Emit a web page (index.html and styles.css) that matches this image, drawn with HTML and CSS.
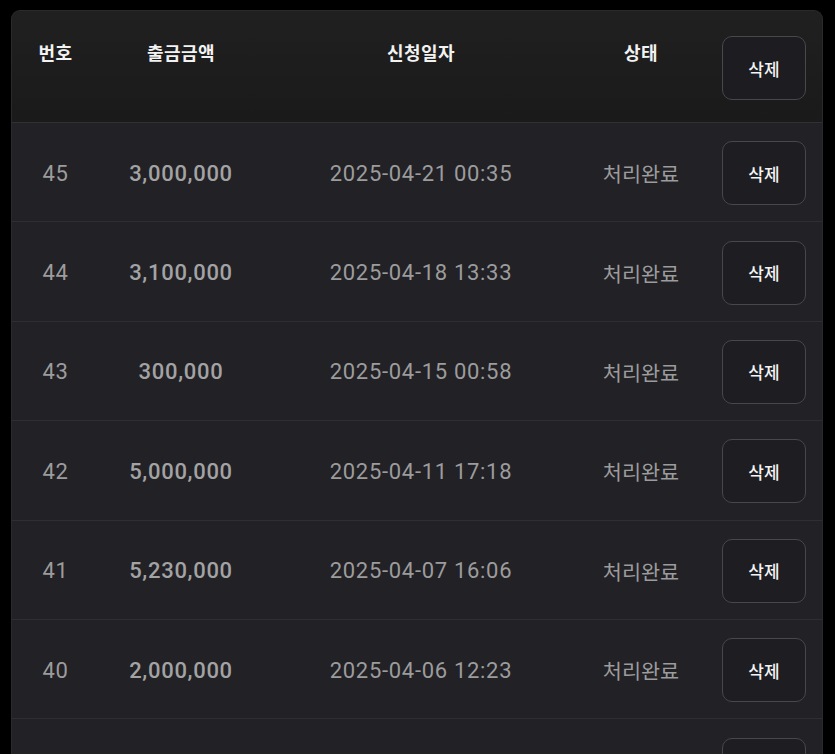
FILE: index.html
```html
<!DOCTYPE html>
<html lang="ko">
<head>
<meta charset="utf-8">
<link rel="stylesheet" href="styles.css">
</head>
<body>
<div class="card">
  <div class="row head">
    <div class="cell">번호</div>
    <div class="cell">출금금액</div>
    <div class="cell">신청일자</div>
    <div class="cell">상태</div>
    <div class="cell act"><button class="btn">삭제</button></div>
  </div>
  <div class="row">
    <div class="cell num">45</div>
    <div class="cell amt">3,000,000</div>
    <div class="cell date">2025-04-21 00:35</div>
    <div class="cell status">처리완료</div>
    <div class="cell act"><button class="btn">삭제</button></div>
  </div>
  <div class="row">
    <div class="cell num">44</div>
    <div class="cell amt">3,100,000</div>
    <div class="cell date">2025-04-18 13:33</div>
    <div class="cell status">처리완료</div>
    <div class="cell act"><button class="btn">삭제</button></div>
  </div>
  <div class="row">
    <div class="cell num">43</div>
    <div class="cell amt">300,000</div>
    <div class="cell date">2025-04-15 00:58</div>
    <div class="cell status">처리완료</div>
    <div class="cell act"><button class="btn">삭제</button></div>
  </div>
  <div class="row">
    <div class="cell num">42</div>
    <div class="cell amt">5,000,000</div>
    <div class="cell date">2025-04-11 17:18</div>
    <div class="cell status">처리완료</div>
    <div class="cell act"><button class="btn">삭제</button></div>
  </div>
  <div class="row">
    <div class="cell num">41</div>
    <div class="cell amt">5,230,000</div>
    <div class="cell date">2025-04-07 16:06</div>
    <div class="cell status">처리완료</div>
    <div class="cell act"><button class="btn">삭제</button></div>
  </div>
  <div class="row">
    <div class="cell num">40</div>
    <div class="cell amt">2,000,000</div>
    <div class="cell date">2025-04-06 12:23</div>
    <div class="cell status">처리완료</div>
    <div class="cell act"><button class="btn">삭제</button></div>
  </div>
  <div class="row last">
    <div class="cell num"></div>
    <div class="cell amt"></div>
    <div class="cell date"></div>
    <div class="cell status"></div>
    <div class="cell act"><button class="btn"></button></div>
  </div>
</div>
</body>
</html>
```
FILE: styles.css
```css
html, body {
  margin: 0;
  padding: 0;
  background: #000;
  height: 754px;
  overflow: hidden;
}
body {
  box-sizing: border-box;
  padding: 10px 12px 0 11px;
  font-family: Roboto, "Noto Sans CJK KR", sans-serif;
}
.card {
  background: #222126;
  border-radius: 9px 9px 0 0;
  overflow: hidden;
  border: 1px solid #2a2a2c;
  border-bottom: none;
  height: 744px;
  box-sizing: border-box;
}
.row {
  display: grid;
  grid-template-columns: 87px 164px 316px 124px 120px;
  height: 99.4px;
  box-sizing: border-box;
  padding-top: 2px;
  border-bottom: 1px solid #2f2e34;
  align-items: center;
}
.cell {
  text-align: center;
}
.head {
  height: 112px;
  padding-top: 0;
  background: linear-gradient(#202020, #1a1a1a);
  border-bottom: 1px solid #303035;
  align-items: start;
}
.head .cell {
  font-family: "Noto Sans CJK KR", sans-serif;
  font-weight: 700;
  font-size: 18px;
  letter-spacing: 0.5px;
  line-height: 24px;
  color: #f2f2f2;
  padding-top: 29px;
}
.head .cell.act {
  padding-top: 25px;
  letter-spacing: 0;
}
.num, .date {
  font-size: 22px;
  letter-spacing: 0.7px;
  color: #9c9c9c;
}
.amt {
  font-size: 22px;
  letter-spacing: 0.7px;
  font-weight: 500;
  color: #a3a3a3;
}
.status {
  font-family: "Noto Sans CJK KR", sans-serif;
  font-size: 20.75px;
  color: #9c9c9c;
}
.act {
  display: flex;
  justify-content: flex-end;
  padding-right: 17px;
}
.btn {
  width: 84px;
  height: 64px;
  border: 1px solid #48474d;
  border-radius: 10px;
  background: #1e1d22;
  color: #f4f4f4;
  font-family: "Noto Sans CJK KR", sans-serif;
  font-size: 17px;
  font-weight: 500;
  padding: 0;
}
.head .btn {
  background: #1d1c20;
}
```
